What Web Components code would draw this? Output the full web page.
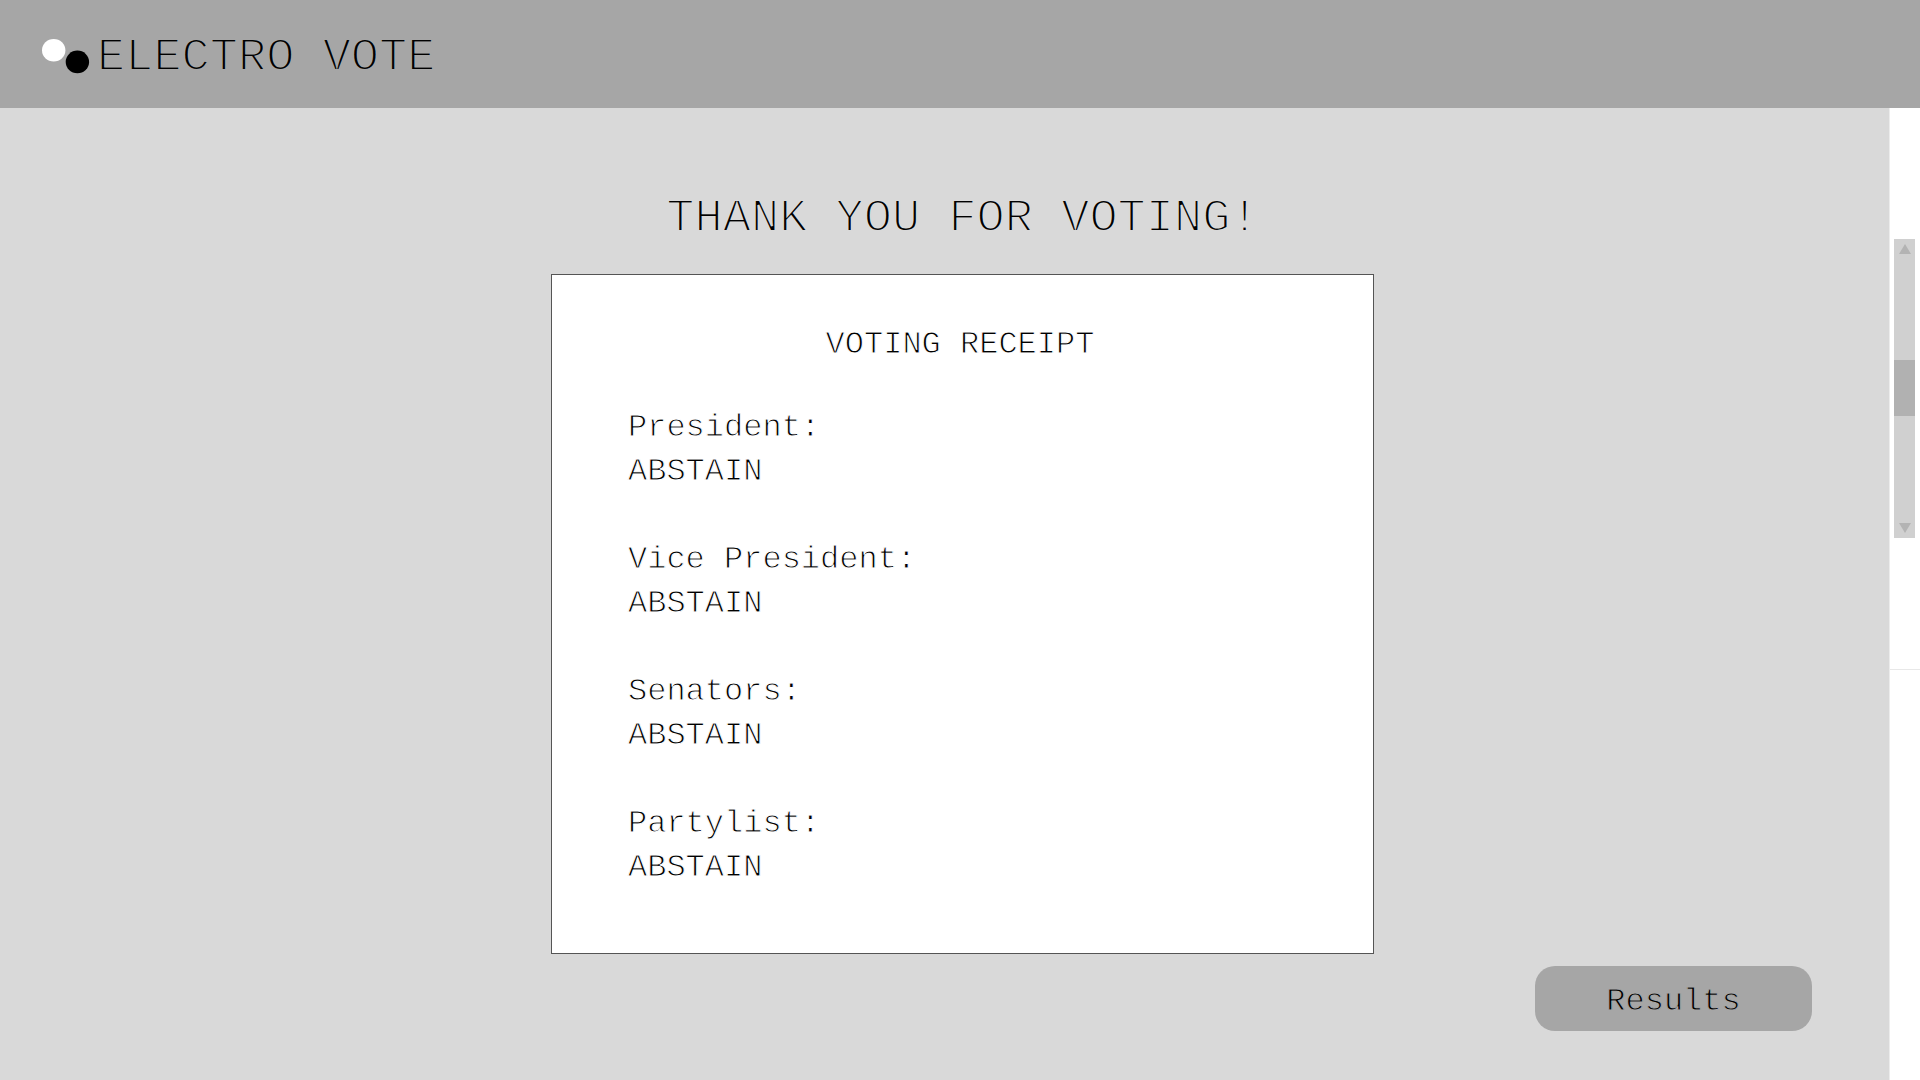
<!DOCTYPE html>
<html lang="en">
<head>
<meta charset="utf-8">
<title>Electro Vote</title>
<style>
html, body { height: 100%; }
body { margin: 0; background: #fff; color: #000; font-family: "Liberation Mono", monospace; font-size: 32px; line-height: 44px; }
</style>
</head>
<body>
<vote-app></vote-app>
<script>
const define = (name, html) => {
  const template = document.createElement('template');
  template.innerHTML = html;
  customElements.define(name, class extends HTMLElement {
    constructor() {
      super();
      this.attachShadow({ mode: 'open' }).append(template.content.cloneNode(true));
    }
  });
};

/* A background-coloured stroke thins the letters to a light weight. */
define('vote-header', `
<style>
:host { display: block; background: #a6a6a6; }
header { display: flex; align-items: center; gap: 7px; min-height: 108px; padding: 8px 42px 0; box-sizing: border-box; }
svg { display: block; flex: none; margin-bottom: 4px; }
h1 { margin: 0; font-size: 47px; line-height: 60px; font-weight: 400; -webkit-text-stroke: 2px #a6a6a6; }
</style>
<header>
  <svg width="48" height="36" viewBox="0 0 48 36" aria-hidden="true">
    <ellipse cx="11.7" cy="12.2" rx="11.7" ry="11.3" fill="#fff"/>
    <ellipse cx="35.4" cy="23.9" rx="11.7" ry="11.3" fill="#000"/>
  </svg>
  <h1><slot></slot></h1>
</header>`);

define('receipt-item', `
<style>
:host { display: block; }
dl, dt, dd { margin: 0; }
</style>
<dl><dt><slot name="office"></slot></dt><dd><slot></slot></dd></dl>`);

define('voting-receipt', `
<style>
:host { display: block; box-sizing: border-box; width: 100%; max-width: 823px; padding: 48px 81px 63px 76px; background: #fff; border: 1px solid #555; -webkit-text-stroke: 1px #fff; }
h3 { margin: 0 0 39px; font: inherit; text-align: center; }
.items { display: flex; flex-direction: column; gap: 44px; }
</style>
<h3><slot name="title"></slot></h3>
<div class="items"><slot></slot></div>`);

define('pill-button', `
<style>
:host { display: block; }
button { display: block; box-sizing: border-box; width: 277px; height: 65px; padding: 6px 0 0; border: 0; border-radius: 20px; background: #a6a6a6; color: #000; font: inherit; cursor: pointer; -webkit-text-stroke: 1px #a6a6a6; }
</style>
<button type="button"><slot></slot></button>`);

define('side-rail', `
<style>
:host { display: block; box-sizing: border-box; flex: none; width: 31px; background: #fff; border-left: 1px solid #ececec; }
.pane { display: flex; box-sizing: border-box; height: 562px; padding: 131px 0 0 4px; border-bottom: 1px solid #e8e8e8; }
.track { display: flex; flex-direction: column; align-items: center; box-sizing: border-box; width: 21px; height: 299px; padding: 5px 0; background: #d0d0d0; }
.thumb { width: 21px; height: 56px; margin: 106px 0 auto; background: #b1b1b1; }
svg { display: block; fill: #b3b3b3; }
</style>
<div class="pane"><div class="track" aria-hidden="true">
  <svg width="12" height="10" viewBox="0 0 12 10"><path d="M6 0 12 10H0z"/></svg>
  <div class="thumb"></div>
  <svg width="12" height="10" viewBox="0 0 12 10"><path d="M0 0H12L6 10z"/></svg>
</div></div>`);

define('vote-app', `
<style>
:host { display: flex; flex-direction: column; min-height: 100%; }
.body { display: flex; flex: 1; }
main { display: flex; flex: 1; flex-direction: column; align-items: center; box-sizing: border-box; padding: 81px 0 49px 36px; background: #d9d9d9; }
h2 { margin: 0 0 25px; font-size: 47px; line-height: 60px; font-weight: 400; text-align: center; -webkit-text-stroke: 2px #d9d9d9; }
pill-button { align-self: flex-end; margin: 12px 77px 0 0; }
</style>
<vote-header>ELECTRO VOTE</vote-header>
<div class="body">
  <main>
    <h2>THANK YOU FOR VOTING!</h2>
    <voting-receipt>
      <span slot="title">VOTING RECEIPT</span>
      <receipt-item><span slot="office">President:</span>ABSTAIN</receipt-item>
      <receipt-item><span slot="office">Vice President:</span>ABSTAIN</receipt-item>
      <receipt-item><span slot="office">Senators:</span>ABSTAIN</receipt-item>
      <receipt-item><span slot="office">Partylist:</span>ABSTAIN</receipt-item>
    </voting-receipt>
    <pill-button>Results</pill-button>
  </main>
  <side-rail></side-rail>
</div>`);
</script>
</body>
</html>
